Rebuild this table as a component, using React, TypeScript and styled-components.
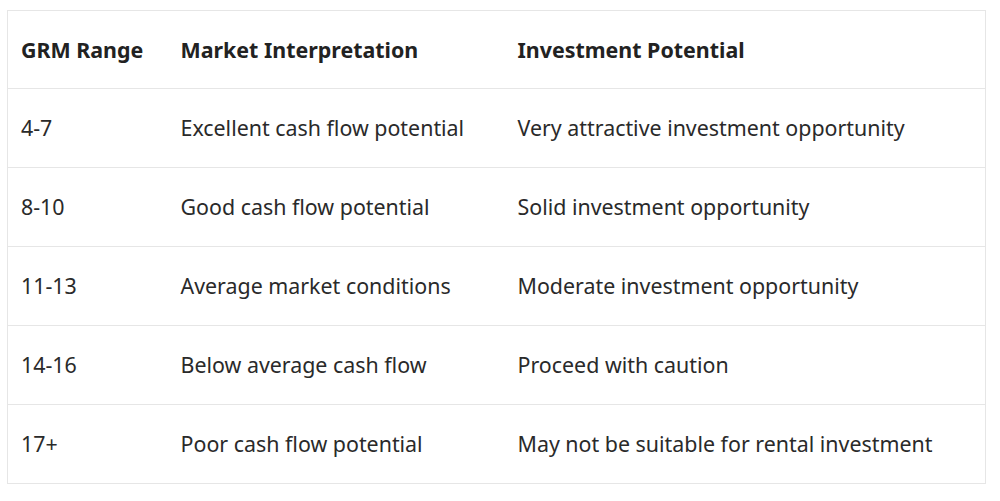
import React from "react";
import styled, { createGlobalStyle } from "styled-components";

const Global = createGlobalStyle`
  html, body { margin: 0; padding: 0; background: #ffffff; }
  body { font-family: "Noto Sans", "Open Sans", sans-serif; color: #222222; }
  *, *::before, *::after { box-sizing: border-box; }
`;

const Wrap = styled.div`
  padding: 10px 15px 0 7px;
`;

const Table = styled.table`
  width: 978px;
  border-collapse: collapse;
  border: 1px solid #e6e6e6;
  table-layout: fixed;
`;

const Th = styled.th<{ $w: number }>`
  width: ${(p) => p.$w}px;
  text-align: left;
  font-weight: 700;
  font-size: 21.4px;
  line-height: 30px;
  padding: 23.5px 13px;
  color: #222222;
  border-bottom: 1px solid #e6e6e6;
`;

const Td = styled.td`
  font-size: 21.4px;
  line-height: 30px;
  padding: 24px 13px;
  color: #2a2a2a;
  border-bottom: 1px solid #e6e6e6;
  white-space: nowrap;
`;

const rows = [
  ["4-7", "Excellent cash flow potential", "Very attractive investment opportunity"],
  ["8-10", "Good cash flow potential", "Solid investment opportunity"],
  ["11-13", "Average market conditions", "Moderate investment opportunity"],
  ["14-16", "Below average cash flow", "Proceed with caution"],
  ["17+", "Poor cash flow potential", "May not be suitable for rental investment"],
];

export default function App() {
  return (
    <Wrap>
      <Global />
      <Table>
        <thead>
          <tr>
            <Th $w={160}>GRM Range</Th>
            <Th $w={337}>Market Interpretation</Th>
            <Th $w={481}>Investment Potential</Th>
          </tr>
        </thead>
        <tbody>
          {rows.map((r) => (
            <tr key={r[0]}>
              {r.map((c, i) => (
                <Td key={i}>{c}</Td>
              ))}
            </tr>
          ))}
        </tbody>
      </Table>
    </Wrap>
  );
}
